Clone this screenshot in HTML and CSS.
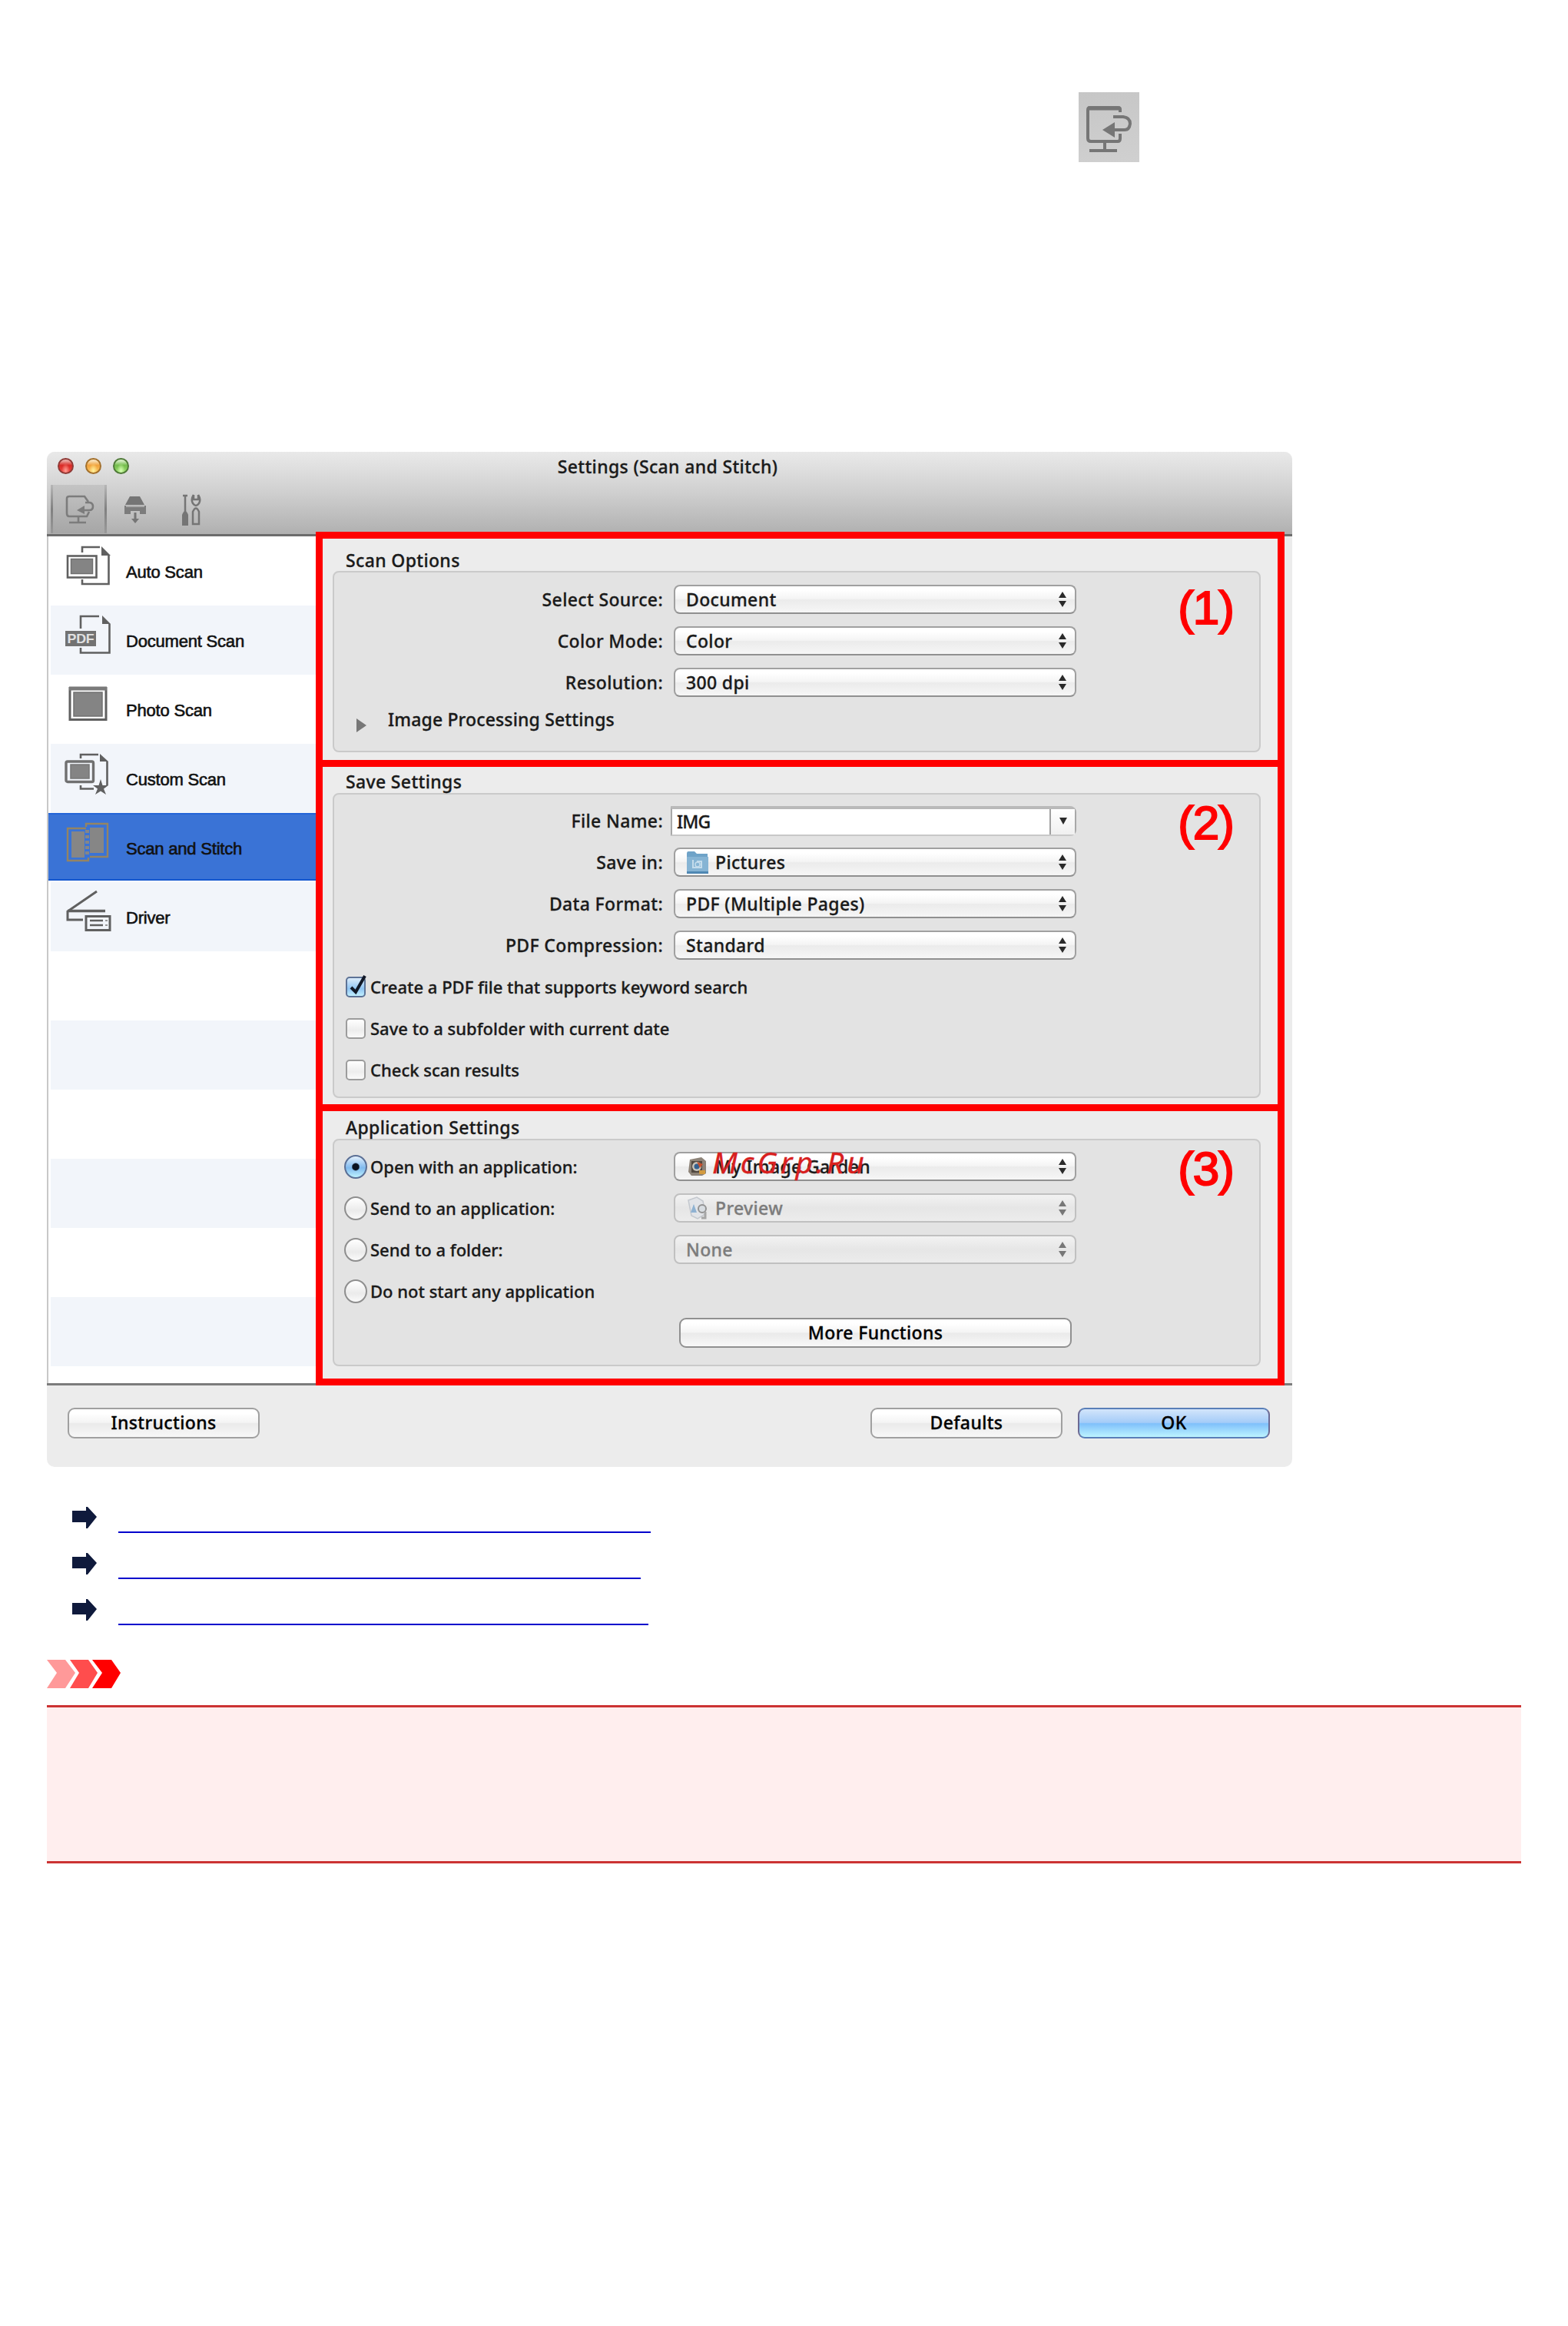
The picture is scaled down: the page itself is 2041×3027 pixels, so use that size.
FILE: index.html
```
<!DOCTYPE html>
<html lang="en">
<head>
  <meta charset="UTF-8">
  <meta name="viewport" content="width=device-width, initial-scale=1.0">
  <title>Settings (Scan and Stitch)</title>
  <link rel="stylesheet" href="styles.css">
</head>
<body>
  <!-- Tab icon shown above the dialog -->
  <div class="tab-icon">
    <svg width="79" height="91" viewBox="0 0 79 91" fill="none" stroke="#767676" stroke-width="4">
      <path d="M54 26V22Q54 20 51 20H15Q12 20 12 23V60Q12 64 16 64H51Q54 64 54 60V54" />
      <path d="M12 21H54" stroke-width="5" />
      <path d="M34 64V76M14 76H50" />
      <path d="M45 32H58Q67 33 67 41Q66 49 60 49H44" />
      <path d="M31 49L47 39V59Z" fill="#767676" stroke="none" />
    </svg>
  </div>

  <div class="window">
    <div class="titlebar">
      <div class="title-row">
        <span class="light red"></span>
        <span class="light yellow"></span>
        <span class="light green"></span>
        <h1 class="title">Settings (Scan and Stitch)</h1>
      </div>
      <div class="toolbar">
        <div class="tool active">
          <svg width="38" height="38" viewBox="0 0 38 38" fill="none" stroke="#7c7c7c" stroke-width="2.6">
            <path d="M30 9L25 2H5Q2 2 2 5V24Q2 28 5 28H28L31 22" />
            <path d="M26 10H32Q36 11 36 15Q36 20 31 20H24" />
            <path d="M15 20L25 14V25Z" fill="#7c7c7c" stroke="none" />
            <path d="M17 28V35M5 36H27" />
          </svg>
        </div>
        <div class="tool">
          <svg width="30" height="38" viewBox="0 0 30 38">
            <path d="M8 2H21L27 13H2Z" fill="#757575" />
            <path d="M1 14H29V25H1Z" fill="#7c7c7c" />
            <path d="M3 15H27" stroke="#aaa" stroke-width="2" />
            <path d="M9 23H21" stroke="#c0c0c0" stroke-width="4" />
            <path d="M15 23V33" stroke="#757575" stroke-width="3" />
            <path d="M10 31H20L15 37Z" fill="#757575" />
          </svg>
        </div>
        <div class="tool">
          <svg width="26" height="42" viewBox="0 0 26 42" fill="none" stroke="#757575" stroke-width="2.5">
            <path d="M5 2V24" />
            <path d="M2 3H8" />
            <path d="M1 42V28Q5 18 9 28V42Z" fill="#757575" stroke="none" />
            <path d="M16 2Q12 8 15 13Q19 19 23 13Q26 8 22 2" />
            <path d="M16 2V8H22V2" />
            <path d="M15 40V24Q19 15 23 24V40Z" />
          </svg>
        </div>
      </div>
    </div>

    <div class="content">
      <ul class="sidebar">
        <li class="item">
          <svg width="62" height="60" viewBox="0 0 62 60" fill="none" stroke="#606060" stroke-width="2.6">
            <rect x="4" y="17.500" width="37.500" height="28" />
            <rect x="8.500" y="21.500" width="28" height="19" fill="#848484" stroke="#707070" stroke-width="1.500" />
            <path d="M23 13V6H46M57.500 17V54H23V48" />
            <path d="M48 5L60 17H48Z" fill="#606060" stroke="none" />
          </svg>
          <span>Auto Scan</span>
        </li>
        <li class="item">
          <svg width="62" height="60" viewBox="0 0 62 60" fill="none" stroke="#606060" stroke-width="2.6">
            <path d="M21 22V6H45M58.500 16V53.500H21V47" />
            <path d="M49 5L60 16H49Z" fill="#606060" stroke="none" />
            <rect x="1" y="25" width="40" height="20" fill="#727272" stroke="none" />
            <text x="3.500" y="41" class="pdf" textLength="35" lengthAdjust="spacingAndGlyphs">PDF</text>
          </svg>
          <span>Document Scan</span>
        </li>
        <li class="item">
          <svg width="62" height="60" viewBox="0 0 62 60" fill="none" stroke="#606060" stroke-width="3">
            <rect x="7" y="9.500" width="47" height="41" />
            <path d="M6 10H55" stroke-width="5" stroke="#7a7a7a" />
            <rect x="12" y="15" width="37" height="31" fill="#848484" stroke="#707070" stroke-width="1.500" />
          </svg>
          <span>Photo Scan</span>
        </li>
        <li class="item">
          <svg width="62" height="60" viewBox="0 0 62 60" fill="none" stroke="#606060" stroke-width="2.600">
            <rect x="2" y="15" width="35.500" height="26.500" rx="2" stroke="#707070" stroke-width="3.400" />
            <rect x="8" y="19" width="24" height="18" fill="#848484" stroke="#777" stroke-width="1.500" />
            <path d="M21 11V6H44M55.500 15V46M21 46V50.500H38" />
            <path d="M46 5L57 15H46Z" fill="#606060" stroke="none" />
            <path d="M47 38L49.500 46H57L51 50.500L54 58L47 53.500L40 58L43 50.500L37 46H44.500Z" fill="#606060" stroke="none" />
          </svg>
          <span>Custom Scan</span>
        </li>
        <li class="item selected">
          <svg width="62" height="60" viewBox="0 0 62 60" fill="none" stroke="#948463" stroke-width="2.400">
            <path d="M28 12H4V54H31V50" />
            <path d="M28 10V6H56V49H33" />
            <path d="M9 16H26V50H9Z" fill="#868686" stroke="none" />
            <path d="M33 11H51V44H33Z" fill="#868686" stroke="none" />
            <path d="M29.500 14V48" stroke="#868686" stroke-width="5" stroke-dasharray="4 3" />
          </svg>
          <span>Scan and Stitch</span>
        </li>
        <li class="item">
          <svg width="62" height="60" viewBox="0 0 62 60" fill="none" stroke="#606060" stroke-width="3">
            <path d="M42 4L4 30V41H24" />
            <path d="M4 29.500H53" stroke-width="3.500" />
            <rect x="28" y="36.500" width="31" height="18" stroke-width="3" />
            <path d="M33 42H50M33 48H50" stroke-width="2.500" />
            <path d="M53 42H56M53 48H56" stroke="#999" stroke-width="2" />
          </svg>
          <span>Driver</span>
        </li>
        <li class="item"></li>
        <li class="item"></li>
        <li class="item"></li>
        <li class="item"></li>
        <li class="item"></li>
        <li class="item"></li>
        <li class="item"></li>
      </ul>

      <div class="panels">
        <section class="panel scan-options">
          <h2>Scan Options</h2>
          <div class="group">
            <div class="row">
              <label>Select Source:</label>
              <div class="select">Document</div>
            </div>
            <div class="row">
              <label>Color Mode:</label>
              <div class="select">Color</div>
            </div>
            <div class="row">
              <label>Resolution:</label>
              <div class="select">300 dpi</div>
            </div>
            <div class="disclosure">
              <span class="triangle"></span>
              <span>Image Processing Settings</span>
            </div>
          </div>
          <span class="callout">(1)</span>
        </section>

        <section class="panel save-settings">
          <h2>Save Settings</h2>
          <div class="group">
            <div class="row">
              <label>File Name:</label>
              <div class="combo">
                <span class="combo-text">IMG</span>
                <span class="combo-button"></span>
              </div>
            </div>
            <div class="row">
              <label>Save in:</label>
              <div class="select">
                <svg class="menu-icon" width="30" height="32" viewBox="0 0 30 32">
                  <path d="M1 5Q1 2 3 2H11L14 5H28V29H1Z" fill="#6fa3c8" />
                  <path d="M1 9H29V29Q29 31 27 31H3Q1 31 1 29Z" fill="#86b4d4" />
                  <path d="M1 28H29V31H1Z" fill="#4f88b3" />
                  <path d="M9 13V23H20V15H14" fill="none" stroke="#c4dcec" stroke-width="2" />
                  <circle cx="15" cy="19" r="3" fill="none" stroke="#c4dcec" stroke-width="1.500" />
                </svg>
                Pictures
              </div>
            </div>
            <div class="row">
              <label>Data Format:</label>
              <div class="select">PDF (Multiple Pages)</div>
            </div>
            <div class="row">
              <label>PDF Compression:</label>
              <div class="select">Standard</div>
            </div>
            <div class="row option">
              <span class="checkbox checked">
                <svg width="30" height="32" viewBox="0 0 30 32">
                  <path d="M7 17L13 23L25 2" fill="none" stroke="#111827" stroke-width="4" />
                </svg>
              </span>
              <span>Create a PDF file that supports keyword search</span>
            </div>
            <div class="row option">
              <span class="checkbox"></span>
              <span>Save to a subfolder with current date</span>
            </div>
            <div class="row option">
              <span class="checkbox"></span>
              <span>Check scan results</span>
            </div>
          </div>
          <span class="callout">(2)</span>
        </section>

        <section class="panel application-settings">
          <h2>Application Settings</h2>
          <div class="group">
            <div class="row option">
              <span class="radio checked"></span>
              <span class="radio-label">Open with an application:</span>
              <div class="select">
                <svg class="menu-icon" width="30" height="32" viewBox="0 0 30 32">
                  <path d="M5 7L20 4L26 9V25L21 28H7L3 23Z" fill="#8d8378" />
                  <path d="M7 9H21V24H7Z" fill="#51483f" />
                  <circle cx="14" cy="16" r="6" fill="#c9c4ba" />
                  <circle cx="14" cy="16" r="3.500" fill="#34618f" />
                  <path d="M14 10L22 13L18 18Z" fill="#c7502e" />
                  <path d="M17 21H25V26H17Z" fill="#d29a3f" />
                </svg>
                My Image Garden
              </div>
            </div>
            <div class="row option">
              <span class="radio"></span>
              <span class="radio-label">Send to an application:</span>
              <div class="select disabled">
                <svg class="menu-icon" width="30" height="32" viewBox="0 0 30 32">
                  <path d="M3 6L14 2L22 7L25 24L15 30L7 26Z" fill="#e2e4e8" stroke="#c4c8ce" stroke-width="1.500" />
                  <path d="M6 22L10 11L14 22Z" fill="#8fb2d2" />
                  <circle cx="21" cy="17" r="5" fill="#d8dde2" stroke="#929292" stroke-width="2" />
                  <path d="M25 21V29H20" fill="none" stroke="#a6a6a6" stroke-width="3" />
                </svg>
                Preview
              </div>
            </div>
            <div class="row option">
              <span class="radio"></span>
              <span class="radio-label">Send to a folder:</span>
              <div class="select disabled">None</div>
            </div>
            <div class="row option">
              <span class="radio"></span>
              <span class="radio-label">Do not start any application</span>
            </div>
            <div class="button more">More Functions</div>
          </div>
          <span class="callout">(3)</span>
          <span class="watermark">McGrp.Ru</span>
        </section>
      </div>
    </div>

    <div class="footer">
      <div class="button instructions">Instructions</div>
      <div class="button">Defaults</div>
      <div class="button primary">OK</div>
    </div>
  </div>

  <ul class="links">
    <li>
      <svg width="32" height="28" viewBox="0 0 32 28"><path d="M0 5H18V0H20L32 13L20 28H18V20H0Z" fill="#0f1a3c" /></svg>
      <a class="link first"></a>
    </li>
    <li>
      <svg width="32" height="28" viewBox="0 0 32 28"><path d="M0 5H18V0H20L32 13L20 28H18V20H0Z" fill="#0f1a3c" /></svg>
      <a class="link second"></a>
    </li>
    <li>
      <svg width="32" height="28" viewBox="0 0 32 28"><path d="M0 5H18V0H20L32 13L20 28H18V20H0Z" fill="#0f1a3c" /></svg>
      <a class="link third"></a>
    </li>
  </ul>

  <svg class="chevrons" width="96" height="37" viewBox="0 0 96 37">
    <path d="M0 0H24L37 17L24 37H0L13 17Z" fill="#ff9999" />
    <path d="M30 0H54L66 17L54 37H30L42 17Z" fill="#ff4d4d" />
    <path d="M59 0H84L96 17L84 37H59L72 17Z" fill="#ff0000" />
  </svg>
  <div class="notice"></div>
</body>
</html>
```
FILE: styles.css
```
* {
  box-sizing: border-box;
}
body {
  margin: 0;
  padding: 120px 61px 0;
  background: #fff;
  color: #1a1a1a;
  font-family: "Noto Sans", "Open Sans", sans-serif;
  font-size: 23px;
  font-weight: 500;
  letter-spacing: 0.35px;
  -webkit-text-stroke: 0.3px;
}
ul {
  list-style: none;
  margin: 0;
  padding: 0;
}
svg {
  display: block;
  flex: none;
}
.tab-icon {
  width: 79px;
  height: 91px;
  margin: 0 0 377px 1343px;
  background: linear-gradient(170deg, #c6c6c6, #d0d0d0);
}

/* Window */
.window {
  width: 1621px;
  height: 1321px;
  display: flex;
  flex-direction: column;
  border-radius: 10px;
  background: #ececec;
  overflow: hidden;
}
.titlebar {
  height: 110px;
  flex: none;
  border-bottom: 3px solid #6c6c6c;
  background: linear-gradient(#e9e9e9, #d2d2d2 45%, #b0b0b0);
}
.title-row {
  position: relative;
  display: flex;
  align-items: center;
  gap: 15px;
  height: 37px;
  padding-left: 14px;
}
.title {
  position: absolute;
  left: 0;
  right: 5px;
  margin: 0;
  font-size: 23px;
  font-weight: 500;
  line-height: 36px;
  text-align: center;
}
.light {
  width: 21px;
  height: 21px;
  border-radius: 50%;
}
.red {
  border: 2px solid #8f3a36;
  background: radial-gradient(ellipse at 50% 85%, #ff9b92, transparent 45%), linear-gradient(#e9a5a0 10%, #d92a26 45%, #f04a42);
}
.yellow {
  border: 2px solid #a3702c;
  background: radial-gradient(ellipse at 50% 85%, #fff09a, transparent 45%), linear-gradient(#f8dfb5 10%, #f1a23c 45%, #fcc862);
}
.green {
  border: 2px solid #4f7a38;
  background: radial-gradient(ellipse at 50% 85%, #d5ffb0, transparent 45%), linear-gradient(#d2ecc0 10%, #74bd4c 45%, #9ce070);
}
.toolbar {
  display: flex;
  height: 70px;
  padding: 6px 0 1px 5px;
}
.tool {
  display: flex;
  align-items: center;
  justify-content: center;
  width: 73px;
}
.active {
  padding-left: 2px;
  border: solid;
  border-width: 0 3px;
  border-image: linear-gradient(#b8b8b8, #808080 50%, #9a9a9a) 1;
  background: linear-gradient(#c4c4c4, #a6a6a6);
}

/* Sidebar */
.content {
  display: flex;
  height: 1102px;
  flex: none;
}
.sidebar {
  width: 351px;
  border-left: 2px solid #c8c8c8;
  background: #fff;
}
.item {
  display: flex;
  align-items: flex-start;
  height: 90px;
  margin-left: 3px;
  padding: 8px 0 0 18px;
  gap: 18px;
  color: #111;
  font: 22px/78px "Liberation Sans", Arial, sans-serif;
  letter-spacing: -0.2px;
  -webkit-text-stroke: 0.6px #111;
}
.item:nth-child(even) {
  background: #f2f5fa;
}
.item.selected {
  height: 88px;
  margin: 0 0 2px;
  padding-left: 21px;
  background: #3a73d6;
  box-shadow: inset 0 2px #2465d8, inset 0 -2px #1356cf;
}
.item:last-child {
  height: 22px;
  background: #fff;
}
.pdf {
  fill: #e0e0e0;
  stroke: none;
  font: bold 17px "Liberation Sans", Arial, sans-serif;
  -webkit-text-stroke: 0;
}

/* Setting panels */
.panels {
  position: relative;
  width: 1261px;
  margin: -6px 0 -3px -1px;
}
.panel {
  position: relative;
  border: 9px solid #f00;
  padding-left: 13px;
  background: #ececec;
}
.panel + .panel {
  margin-top: -9px;
}
.panel h2 {
  margin: 0;
  padding-left: 17px;
  font-size: 23px;
  font-weight: 500;
  line-height: 26px;
}
.scan-options {
  height: 306px;
  padding-top: 15px;
}
.scan-options h2 {
  margin-bottom: 1px;
}
.save-settings {
  height: 457px;
  padding-top: 6px;
}
.save-settings h2 {
  margin-bottom: 2px;
}
.application-settings {
  height: 366px;
  padding-top: 8px;
}
.application-settings h2 {
  margin-bottom: 2px;
}
.group {
  display: flex;
  flex-direction: column;
  gap: 16px;
  width: 1208px;
  padding: 16px 0 0 1px;
  border: 2px solid #cacaca;
  border-radius: 8px;
  background: #e3e3e3;
}
.scan-options .group {
  height: 236px;
}
.save-settings .group {
  height: 397px;
  padding-top: 15px;
}
.application-settings .group {
  height: 296px;
  padding-top: 15px;
}
.row {
  display: flex;
  align-items: center;
  height: 38px;
}
.row label {
  width: 427px;
  margin-right: 14px;
  text-align: right;
}
.select {
  position: relative;
  display: flex;
  align-items: center;
  width: 524px;
  height: 38px;
  padding-left: 14px;
  border: 2px solid #a0a0a0;
  border-bottom-color: #909090;
  border-radius: 8px;
  background: linear-gradient(#fff 15%, #f4f4f4 48%, #ebebeb 52%, #f6f6f6);
  font-size: 23px;
  letter-spacing: 0.35px;
}
.select::before,
.select::after {
  content: "";
  position: absolute;
  right: 11px;
  border: solid transparent;
  border-width: 0 5px;
}
.select::before {
  top: 7px;
  border-bottom: 8px solid #2a2a2a;
}
.select::after {
  bottom: 7px;
  border-top: 8px solid #2a2a2a;
}
.select.disabled {
  border-color: #c0c0c0;
  background: linear-gradient(#f2f2f2, #e6e6e6 50%, #ececec);
  color: #7c7c7c;
}
.select.disabled::before {
  border-bottom-color: #777;
}
.select.disabled::after {
  border-top-color: #777;
}
.menu-icon {
  margin: 0 8px 0 0;
}
.combo {
  display: flex;
  width: 528px;
  height: 39px;
  margin-left: -4px;
  border: 2px solid #a8a8a8;
  border-top: 4px solid #b9b9b9;
  border-bottom-color: #c8c8c8;
  border-radius: 0 8px 8px 0;
  background: #fff;
}
.combo-text {
  flex: 1;
  padding-left: 6px;
  line-height: 32px;
  letter-spacing: -0.9px;
}
.combo-button {
  display: flex;
  align-items: center;
  justify-content: center;
  width: 33px;
  border-left: 2px solid #a0a0a0;
  background: linear-gradient(#fff, #f0f0f0);
}
.combo-button::after {
  content: "";
  margin-bottom: 2px;
  border: solid transparent;
  border-width: 0 5.5px;
  border-top: 9px solid #2a2a2a;
}
.disclosure {
  display: flex;
  align-items: center;
  height: 38px;
  margin-top: -6px;
  padding-left: 28px;
  gap: 28px;
  letter-spacing: 0.15px;
}
.triangle {
  margin-top: 16px;
  border: solid transparent;
  border-width: 9px 0;
  border-left: 13px solid #777;
}
.option {
  padding-left: 14px;
  font-size: 22px;
  letter-spacing: 0;
}
.checkbox {
  width: 26px;
  height: 27px;
  margin-right: 6px;
  border: 2px solid #9c9c9c;
  border-radius: 5px;
  background: linear-gradient(#fff, #ededed 60%, #fafafa);
}
.checkbox.checked {
  border-color: #5d7396;
  background: linear-gradient(#dcecfb, #8fc4f2 60%, #c2f0ff);
}
.checkbox svg {
  margin: -5px 0 0 -2px;
}
.radio {
  width: 30px;
  height: 31px;
  margin: 0 4px 0 -2px;
  border: 2px solid #8e8e8e;
  border-radius: 50%;
  background: linear-gradient(#fff, #ebebeb 60%, #fafafa);
}
.radio.checked {
  border-color: #5a6f95;
  background: radial-gradient(circle, #0b1220 4px, transparent 5.5px), linear-gradient(#e3f0fc, #7fb9ee 55%, #bdf2ff);
}
.radio-label {
  width: 395px;
}
.button {
  width: 250px;
  height: 40px;
  border: 2px solid #a0a0a0;
  border-radius: 9px;
  background: linear-gradient(#fff 15%, #f4f4f4 48%, #eaeaea 52%, #f8f8f8);
  color: #000;
  line-height: 35px;
  text-align: center;
}
.more {
  width: 511px;
  height: 39px;
  margin-left: 448px;
  border-color: #909090;
}
.primary {
  border-color: #5a7fb8 #6c6a94;
  background: linear-gradient(#d3e5fb, #a4ccf8 48%, #7fc0fb 52%, #bdf4ff);
}
.callout {
  position: absolute;
  top: 58px;
  right: 57px;
  color: #f00;
  font: 62px/64px "Liberation Sans", Arial, sans-serif;
  letter-spacing: -1px;
  -webkit-text-stroke: 2px #f00;
}
.save-settings .callout {
  top: 41px;
}
.application-settings .callout {
  top: 43px;
}
.watermark {
  position: absolute;
  top: 40px;
  left: 507px;
  color: #d8201f;
  font-size: 39px;
  font-style: italic;
  font-weight: 400;
  line-height: 52px;
  letter-spacing: 4px;
}

/* Bottom bar */
.footer {
  display: flex;
  flex: 1;
  gap: 20px;
  padding: 29px 29px 0 27px;
  border-top: 3px solid #7c7c7c;
}
.instructions {
  margin-right: auto;
}

/* Related links */
.links {
  padding: 52px 0 0 33px;
}
.links li {
  display: flex;
  height: 60px;
  gap: 27.5px;
}
.link {
  height: 34px;
  border-bottom: 2px solid #0000cc;
}
.first {
  width: 693px;
}
.second {
  width: 680px;
}
.third {
  width: 690px;
}
.chevrons {
  margin-top: 19px;
}
.notice {
  width: 1919px;
  height: 206px;
  margin-top: 22px;
  border: solid #cc3333;
  border-width: 3px 0;
  background: #ffeeee;
}
```
